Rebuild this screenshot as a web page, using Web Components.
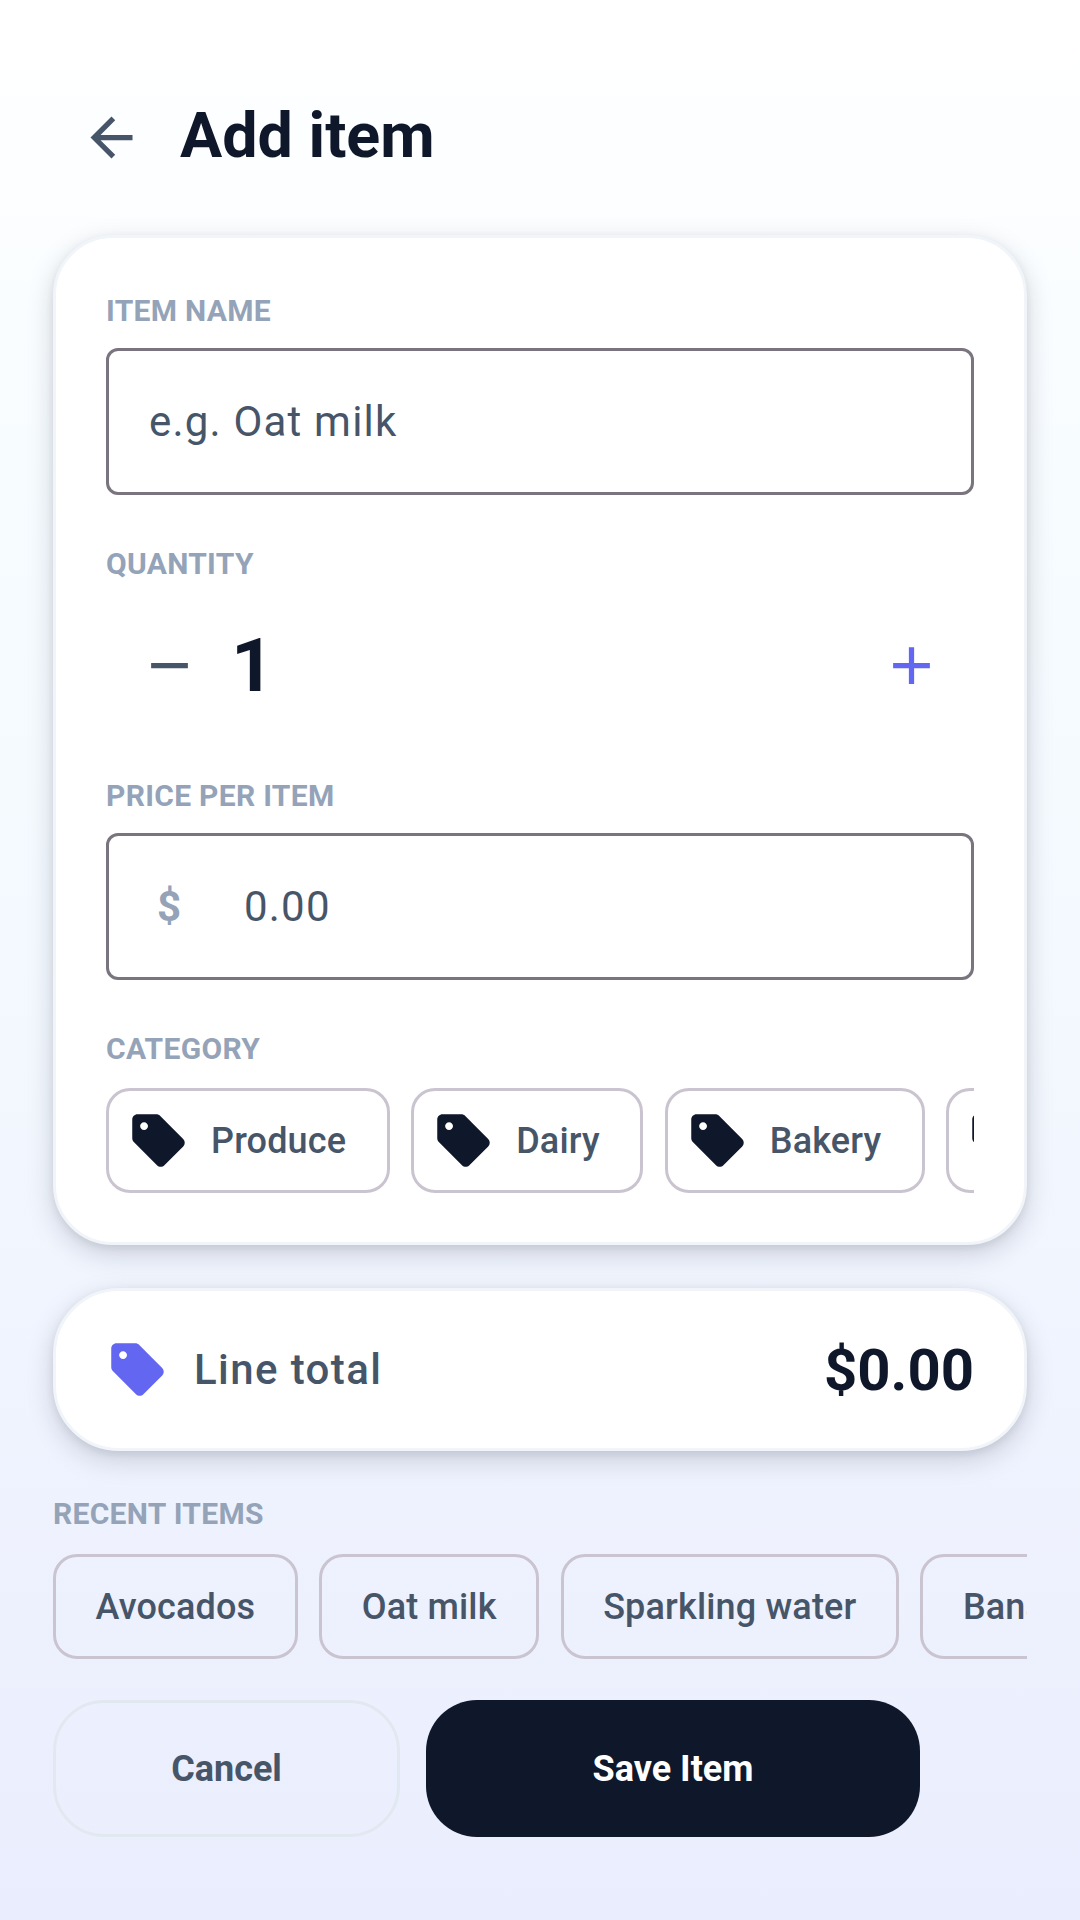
<!DOCTYPE html>
<html><head><meta charset="utf-8"><style>
html,body{margin:0;padding:0}
body{font-family:Roboto,"Liberation Sans",sans-serif;color:#0f172a}
</style></head><body>
<app-screen>
  <page-header>Add item</page-header>
  <form-card>
    <field-label>ITEM NAME</field-label>
    <text-field placeholder="e.g. Oat milk"></text-field>
    <field-label style="margin-top:49px">QUANTITY</field-label>
    <qty-stepper value="1"></qty-stepper>
    <field-label style="margin-top:41px">PRICE PER ITEM</field-label>
    <text-field prefix="$" placeholder="0.00"></text-field>
    <field-label style="margin-top:49px">CATEGORY</field-label>
    <chip-row style="margin-top:19px">
      <tag-chip icon>Produce</tag-chip>
      <tag-chip icon>Dairy</tag-chip>
      <tag-chip icon>Bakery</tag-chip>
      <tag-chip icon>Pantry</tag-chip>
    </chip-row>
  </form-card>
  <total-card label="Line total" value="$0.00"></total-card>
  <field-label style="margin-top:43px">RECENT ITEMS</field-label>
  <chip-row style="margin-top:20px">
    <tag-chip>Avocados</tag-chip>
    <tag-chip>Oat milk</tag-chip>
    <tag-chip>Sparkling water</tag-chip>
    <tag-chip>Bananas</tag-chip>
  </chip-row>
  <action-bar></action-bar>
</app-screen>
<script>
const TAG='M21.41 11.41l-8.83-8.83c-.37-.37-.88-.58-1.41-.58H4c-1.1 0-2 .9-2 2v7.17c0 .53.21 1.04.59 1.41l8.83 8.83c.78.78 2.05.78 2.83 0l7.17-7.17c.78-.79.78-2.05-.01-2.83zM6.5 8C5.67 8 5 7.33 5 6.5S5.67 5 6.5 5 8 5.67 8 6.5 7.33 8 6.5 8z';
function def(name,css,html){
  customElements.define(name,class extends HTMLElement{
    constructor(){super();this.attachShadow({mode:'open'})}
    connectedCallback(){
      const a=k=>this.getAttribute(k)||'';
      this.shadowRoot.innerHTML='<style>'+css+'</style>'+(typeof html==='function'?html(a,this):html);
    }
  });
}
const SHADOW='0 9px 27px rgba(15,23,42,.17),0 3px 9px rgba(15,23,42,.08)';
def('app-screen',`:host{display:flex;flex-direction:column;box-sizing:border-box;height:1920px;padding:0 53px;overflow:hidden;
  background:linear-gradient(180deg,#ffffff 0%,#f7fcff 25%,#f4f9ff 50%,#eaedfd 100%)}`,`<slot></slot>`);
def('page-header',`:host{display:flex;align-items:center;height:78px;margin-top:97px;margin-bottom:60px;padding-left:27px;gap:37px}
  svg{width:63px;height:63px;flex:none;margin-top:2px;fill:#475569}
  h1{margin:0;font:700 62.8px/78px Roboto,sans-serif;color:#0f172a}`,
  `<svg viewBox="0 0 24 24"><path d="M20 11H7.83l5.59-5.59L12 4l-8 8 8 8 1.41-1.41L7.83 13H20v-2z"/></svg><h1><slot></slot></h1>`);
def('form-card',`:host{display:block;box-sizing:border-box;padding:53px 50px 49px;background:#fff;border:3px solid #f1f5f9;border-radius:60px;
  box-shadow:${SHADOW}}`,`<slot></slot>`);
def('field-label',`:host{display:block;font:700 30px/40px Roboto,sans-serif;color:#94a3b8;letter-spacing:.3px}`,`<slot></slot>`);
def('text-field',`:host{display:flex;align-items:center;box-sizing:border-box;height:147px;margin-top:17px;border:3px solid #79747e;border-radius:12px;padding:0 39px 0 40px;
   font:400 42px/1 Roboto,sans-serif;color:#475569;letter-spacing:1.2px}
   b{color:#94a3b8;font-weight:700;width:95px;padding-left:8px;box-sizing:border-box;flex:none}`,
   (a)=>(a('prefix')?`<b>${a('prefix')}</b>`:'')+`<span>${a('placeholder')}</span>`);
def('qty-stepper',`:host{display:flex;align-items:center;height:140px;margin-top:11px;padding:0 31px 0 32px}
   svg{width:63px;height:63px;flex:none}
   span{font:700 75px/1 Roboto,sans-serif;color:#0f172a;margin-left:30px;flex:1}`,
   (a)=>`<svg viewBox="0 0 24 24" fill="#475569"><path d="M19 13H5v-2h14v2z"/></svg><span>${a('value')}</span>
   <svg viewBox="0 0 24 24" fill="#6366f1"><path d="M19 13h-6v6h-2v-6H5v-2h6V5h2v6h6v2z"/></svg>`);
def('chip-row',`:host{display:flex;gap:21.5px;margin-top:21px;overflow:hidden}`,`<slot></slot>`);
def('tag-chip',`:host{display:flex;align-items:center;flex:none;box-sizing:border-box;height:105px;border:3px solid #cac4d0;border-radius:24px;padding:0 39.5px;
    font:500 36px/1 Roboto,sans-serif;letter-spacing:.16px;color:#475569;gap:21px}
    :host([icon]){padding:0 40.5px 0 18px}
    svg{width:63px;height:63px;fill:#0f172a}`,
    (a,el)=>(el.hasAttribute('icon')?`<svg viewBox="0 0 24 24"><path d="${TAG}"/></svg>`:'')+`<slot></slot>`);
def('total-card',`:host{display:flex;align-items:center;box-sizing:border-box;height:163px;margin-top:43px;padding:0 50px;background:#fff;border:3px solid #f1f5f9;border-radius:66px;
    box-shadow:${SHADOW}}
    svg{width:63px;height:63px;fill:#6366f1;flex:none}
    span{flex:1;margin-left:25px;font:500 42px/1 Roboto,sans-serif;color:#475569;letter-spacing:1.4px}
    b{font:700 58px/1 Roboto,sans-serif;color:#0f172a}`,
    (a)=>`<svg viewBox="0 0 24 24"><path d="${TAG}"/></svg><span>${a('label')}</span><b>${a('value')}</b>`);
def('action-bar',`:host{display:flex;gap:26px;margin-top:41px}
    div{box-sizing:border-box;height:137px;display:flex;align-items:center;justify-content:center;font:700 36px/1 Roboto,sans-serif;border-radius:51px}
    .c{width:347px;border:3px solid #e2e8f0;color:#475569}
    .s{width:494px;background:#0f172a;color:#fff}`,
    `<div class="c">Cancel</div><div class="s">Save Item</div>`);
</script>
</body></html>
